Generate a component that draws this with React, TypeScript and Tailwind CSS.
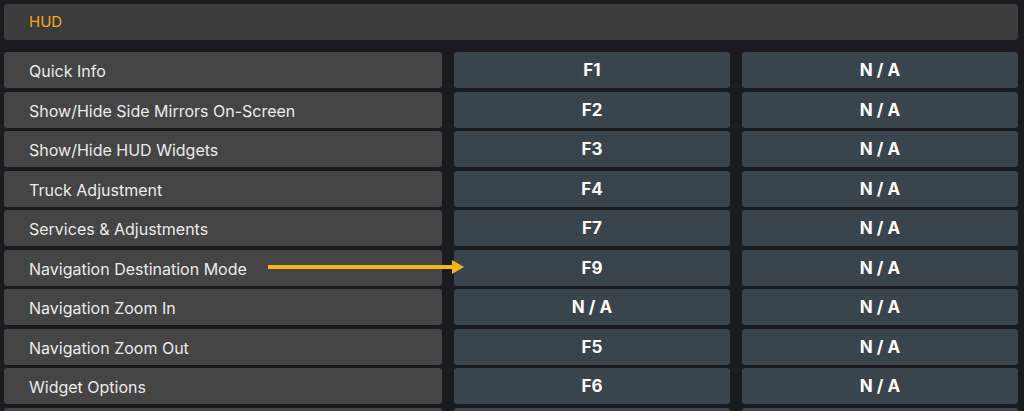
import React from "react";

const rows: [string, string, string][] = [
  ["Quick Info", "F1", "N / A"],
  ["Show/Hide Side Mirrors On-Screen", "F2", "N / A"],
  ["Show/Hide HUD Widgets", "F3", "N / A"],
  ["Truck Adjustment", "F4", "N / A"],
  ["Services & Adjustments", "F7", "N / A"],
  ["Navigation Destination Mode", "F9", "N / A"],
  ["Navigation Zoom In", "N / A", "N / A"],
  ["Navigation Zoom Out", "F5", "N / A"],
  ["Widget Options", "F6", "N / A"],
  ["", "", ""],
];

export default function App() {
  return (
    <div
      className="relative w-[1024px] h-[411px] overflow-hidden bg-[#1a1b1e] pt-[4px] pl-[4px] pr-[6px]"
      style={{ fontFamily: "Inter, 'Noto Sans', sans-serif" }}
    >
      <div className="h-[36px] rounded-[3px] bg-[#3c3c3c] flex items-center pl-[25px] pt-[1px] text-[15px] text-[#f2a91c]">
        HUD
      </div>
      <div className="mt-[12px] flex flex-col gap-[3.5px]">
        {rows.map(([label, k1, k2], i) => (
          <div key={i} className="relative grid grid-cols-[438px_276px_276px] gap-x-[12px] h-[36px]">
            <div className="rounded-[3px] bg-[#454545] flex items-center pl-[25px] pt-[2px] text-[16px] text-[#ebebeb]">
              {label}
            </div>
            <div className="rounded-[3px] bg-[#3a444c] flex items-center justify-center pt-[2px] text-[17px] font-bold text-white">
              {k1}
            </div>
            <div className="rounded-[3px] bg-[#3a444c] flex items-center justify-center pt-[2px] text-[17px] font-bold text-white">
              {k2}
            </div>
            {i === 5 && (
              <svg
                className="absolute left-[264px] top-[9px]"
                width="196"
                height="16"
                viewBox="0 0 196 16"
              >
                <rect x="0" y="6" width="186" height="4" fill="#f6b716" />
                <polygon points="184,1 196,8 184,15" fill="#f6b716" />
              </svg>
            )}
          </div>
        ))}
      </div>
    </div>
  );
}
